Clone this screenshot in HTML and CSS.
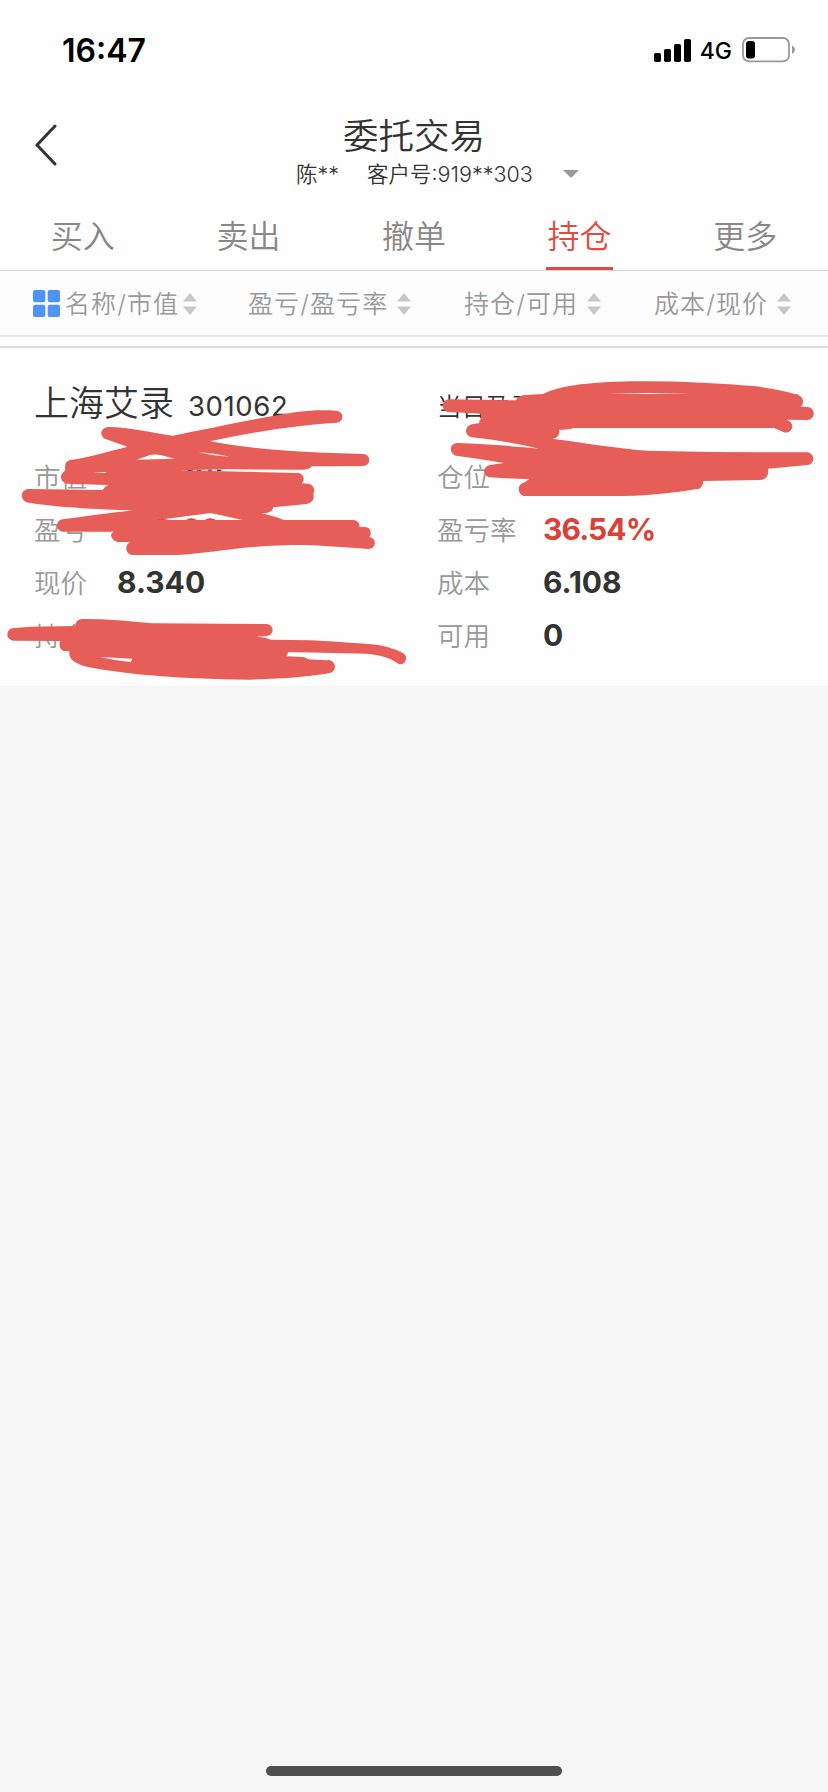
FILE: index.html
```html
<!DOCTYPE html>
<html lang="zh-CN">
<head>
  <meta charset="UTF-8" />
  <meta name="viewport" content="width=device-width, initial-scale=1.0"/>
  <title>委托交易</title>
  <link rel="stylesheet" href="styles.css">
</head>
<body>
  <div class="status-bar">
    <span class="time">16:47</span>
    <div class="status-icons">
      <svg class="signal" width="37" height="23" viewBox="0 0 37 23">
        <rect x="0" y="14" width="7" height="9" rx="1.8"/>
        <rect x="10" y="10" width="7" height="13" rx="1.8"/>
        <rect x="20" y="5" width="7" height="18" rx="1.8"/>
        <rect x="30" y="0" width="7" height="23" rx="1.8"/>
      </svg>
      <span class="network">4G</span>
      <svg class="battery" width="54" height="26" viewBox="0 0 54 26">
        <rect x="1" y="1" width="46" height="23.4" rx="6" fill="none" stroke="#999" stroke-width="1.8"/>
        <rect x="4" y="4" width="9" height="17.5" rx="3"/>
        <path d="M50 8.5 Q53 10 53 12.8 Q53 15.500 50 17Z" fill="#999"/>
      </svg>
    </div>
  </div>

  <header class="header">
    <svg class="back" width="22" height="42" viewBox="0 0 22 42">
      <path d="M20 2 L2 21 L20 40" fill="none" stroke="#333" stroke-width="3" stroke-linecap="round" stroke-linejoin="round"/>
    </svg>
    <h1>委托交易</h1>
    <div class="account">
      <span class="user">陈**</span>
      <span>客户号:919**303</span>
      <svg class="dropdown" width="16" height="8" viewBox="0 0 16 8"><path d="M0 0H16L8 8Z" fill="#999"/></svg>
    </div>
  </header>

  <nav class="tabs">
    <a class="tab">买入</a>
    <a class="tab">卖出</a>
    <a class="tab">撤单</a>
    <a class="tab active">持仓</a>
    <a class="tab">更多</a>
  </nav>

  <div class="sort-bar">
    <div class="sort">
      <svg class="grid-icon" width="27" height="27" viewBox="0 0 27 27" fill="#4f94f5">
        <rect width="12.300" height="12.300" rx="2"/>
        <rect x="14.700" width="12.300" height="12.300" rx="2"/>
        <rect y="14.700" width="12.300" height="12.300" rx="2"/>
        <rect x="14.700" y="14.700" width="12.300" height="12.300" rx="2"/>
      </svg>
      <span>名称/市值</span>
      <svg class="arrows near" width="14" height="22" viewBox="0 0 14 22"><path d="M0 8.500L7 0L14 8.500ZM0 13.500L7 22L14 13.500Z"/></svg>
    </div>
    <div class="sort">
      <span>盈亏/盈亏率</span>
      <svg class="arrows" width="14" height="22" viewBox="0 0 14 22"><path d="M0 8.500L7 0L14 8.500ZM0 13.500L7 22L14 13.500Z"/></svg>
    </div>
    <div class="sort">
      <span>持仓/可用</span>
      <svg class="arrows" width="14" height="22" viewBox="0 0 14 22"><path d="M0 8.500L7 0L14 8.500ZM0 13.500L7 22L14 13.500Z"/></svg>
    </div>
    <div class="sort">
      <span>成本/现价</span>
      <svg class="arrows" width="14" height="22" viewBox="0 0 14 22"><path d="M0 8.500L7 0L14 8.500ZM0 13.500L7 22L14 13.500Z"/></svg>
    </div>
  </div>

  <main class="holding">
    <div class="col left">
      <div class="stock">
        <span class="name">上海艾录</span>
        <span class="code">301062</span>
      </div>
      <div class="row"><span class="label">市值</span></div>
      <div class="row"><span class="label">盈亏</span></div>
      <div class="row"><span class="label">现价</span><span class="value">8.340</span></div>
      <div class="row"><span class="label">持仓</span></div>
    </div>
    <div class="col right">
      <div class="stock"><span class="today">当日盈亏</span></div>
      <div class="row"><span class="label">仓位</span></div>
      <div class="row"><span class="label">盈亏率</span><span class="value up">36.54%</span></div>
      <div class="row"><span class="label">成本</span><span class="value">6.108</span></div>
      <div class="row"><span class="label">可用</span><span class="value">0</span></div>
    </div>

    <!-- marker strokes over the private numbers -->
    <svg class="marker" viewBox="0 0 2484 948" fill="#e75d58" fill-rule="evenodd">
      <path d="M325 171C380 170 450 187 518 197C650 172 750 148 890 126C930 121 970 119 1008 122A18 18 0 0 1 1010 158C890 166 760 185 630 214C760 238 900 248 1090 252A18 18 0 0 1 1090 288L935 289Q930 299 910 299L680 298L540 301L670 304L890 309A18 18 0 0 1 905 340L925 341C945 345 945 365 940 370C945 390 935 398 920 402L820 412C818 425 805 430 785 430Q815 436 852 450L1060 450A18 18 0 0 1 1078 471L1095 471C1115 472 1115 495 1108 501A18 18 0 0 1 1105 537C1040 532 980 528 920 525C850 525 800 527 750 532C680 538 600 552 530 555L398 555C375 553 373 525 390 516L355 516C335 514 325 490 342 485L190 485A18 18 0 0 1 188 448C250 440 320 430 400 421C290 418 180 412 85 398C60 393 58 360 85 357L308 360Q315 348 325 345L200 341C178 335 178 310 196 302C193 285 197 273 210 270C270 262 320 245 383 230L318 208C298 200 298 175 325 171Z
        M410 269L450 255Q468 252 485 256L523 266ZM280 309L315 306L320 309ZM595 246Q640 250 690 260Q640 258 595 246ZM475 450L500 446L632 429L728 450Z"/>
      <path d="M562 302h16v-2h-14ZM590 302h14v-2h-14ZM622 302h14v-3h-12ZM650 303h14v-4h-12Z" fill="#333"/>
      <path d="M470 450Q486 444 506 450ZM558 450Q574 440 590 450ZM614 450Q630 440 648 450Z" fill="#d9413b"/>
      <path transform="translate(0 510)" d="M42 264L95 260L226 258C226 245 235 236 250 237C320 237 390 243 455 250L800 252A18 18 0 0 1 800 288L770 290Q800 292 812 299L930 301C1010 305 1070 310 1130 314C1165 320 1195 330 1212 341A18 18 0 0 1 1196 372C1165 350 1140 345 1100 341L865 336L859 349L910 351Q920 353 925 358L980 361A19 19 0 0 1 990 399C930 410 850 416 750 419C640 418 540 414 440 405C370 398 310 390 260 380C220 370 205 355 208 334L190 333C178 328 176 312 181 303L40 302A19 19 0 0 1 42 264ZM300 351L397 356L392 366Q345 362 300 351Z"/>
      <path transform="translate(1242 0)" d="M105 88L305 91C312 80 322 75 335 75L388 72C415 58 450 50 500 43C560 37 620 33 700 34C810 34 920 40 1025 49C1070 55 1110 63 1140 71C1165 73 1175 95 1160 110L1180 111A19 19 0 0 1 1180 150L1118 149L1124 152A18 18 0 0 1 1108 186L1080 174L478 174Q468 180 435 179C438 195 430 205 415 206C500 216 600 235 700 242L900 246L1178 247A19 19 0 0 1 1180 285L1062 296C1066 315 1055 329 1040 330L868 333C866 350 858 359 845 358C780 368 710 377 630 378L330 378C308 373 310 340 330 338L345 328L225 322C205 315 205 290 228 285L270 279C220 270 170 263 125 257C105 250 105 220 130 219C210 221 300 229 375 236C310 220 240 209 172 202C148 195 152 165 178 162L195 160Q195 150 201 145L200 131L105 126A19 19 0 0 1 105 88ZM585 71L700 69L830 71L700 72Z"/>
    </svg>
  </main>

  <div class="home-indicator"></div>
</body>
</html>
```
FILE: styles.css
```css
* {
  box-sizing: border-box;
}

body {
  margin: 0;
  height: 1792px;
  display: flex;
  flex-direction: column;
  background: #f6f6f6;
  color: #333;
  font-family: Inter, "Noto Sans CJK SC", sans-serif;
  font-weight: 350;
}

.status-bar {
  height: 100px;
  padding: 0 32px 0 62px;
  display: flex;
  justify-content: space-between;
  align-items: center;
  background: #fefefe;
  color: #000;
}

.time {
  font-size: 32px;
  font-weight: 600;
}

.status-icons {
  display: flex;
  align-items: center;
}

.network {
  margin: 2px 10px 0 9px;
  font-size: 23px;
  font-weight: 500;
}

.header {
  height: 101px;
  display: grid;
  grid-template-columns: 36px 1fr 36px;
  grid-template-rows: 59px 24px;
  padding-top: 3px;
  background: #fefefe;
}

.back {
  grid-row: 1 / 3;
  margin: 21px 0 0 35px;
}

h1 {
  margin: 0;
  padding-top: 8px;
  font-size: 35.5px;
  font-weight: 350;
  line-height: 52px;
  text-align: center;
}

.account {
  grid-column: 2;
  display: flex;
  align-items: center;
  padding-left: 260px;
  font-size: 21.5px;
  line-height: 24px;
  white-space: nowrap;
}

.user {
  width: 71px;
}

.dropdown {
  margin-left: auto;
  margin-right: 213px;
}

.tabs {
  height: 70px;
  display: flex;
  background: #fefefe;
  border-bottom: 1px solid #d8d8d8;
}

.tab {
  flex: 1;
  display: flex;
  justify-content: center;
  color: #888;
  font-size: 32px;
  line-height: 71px;
}

.tab.active {
  color: #e34b41;
}

.tab.active::after {
  content: "";
  align-self: flex-end;
  width: 67px;
  height: 3px;
  margin-left: -65.5px;
  margin-right: -1.5px;
  background: #dc4b41;
}

.sort-bar {
  height: 66px;
  padding-left: 33px;
  display: grid;
  grid-template-columns: 215px 216px 190px 1fr;
  background: #fdfdfd;
  border-bottom: 2px solid #ebebeb;
}

.sort {
  display: flex;
  align-items: center;
  color: #999;
  font-size: 25px;
  letter-spacing: 1.1px;
  white-space: nowrap;
}

.sort span {
  margin-top: -2px;
}

.grid-icon {
  margin-right: 5px;
}

.arrows {
  margin: 2px 0 0 9px;
  fill: #c8c8c8;
}

.arrows.near {
  margin-left: 4px;
}

.holding {
  position: relative;
  height: 349px;
  padding-left: 34px;
  display: flex;
  background: #fefefe;
}

.holding::before {
  content: "";
  position: absolute;
  left: 0;
  right: 0;
  top: 9px;
  height: 2px;
  background: #dcdcdc;
}

.left {
  width: 403px;
}

.stock {
  height: 112px;
  padding-top: 40px;
  display: flex;
  align-items: baseline;
}

.name {
  font-size: 35px;
  line-height: 52px;
}

.code {
  margin-left: 14px;
  font-size: 27.5px;
  font-weight: 400;
  letter-spacing: 0.6px;
}

.today {
  font-size: 24.5px;
  line-height: 60px;
}

.row {
  height: 53px;
  display: flex;
  align-items: center;
}

.label {
  color: #999;
  font-size: 26.5px;
}

.left .label {
  width: 83px;
}

.right .label {
  width: 106px;
}

.value {
  font-size: 30px;
  font-weight: 700;
}

.value.up {
  color: #d9413b;
  letter-spacing: -0.9px;
}

/* starts at the stock name and runs to the bottom of the card */
.marker {
  position: absolute;
  left: 0;
  top: 33px;
  width: 828px;
  height: 316px;
}

.home-indicator {
  width: 296px;
  height: 10px;
  margin: auto auto 16px;
  border-radius: 5px;
  background: #4f4f4f;
}
```
